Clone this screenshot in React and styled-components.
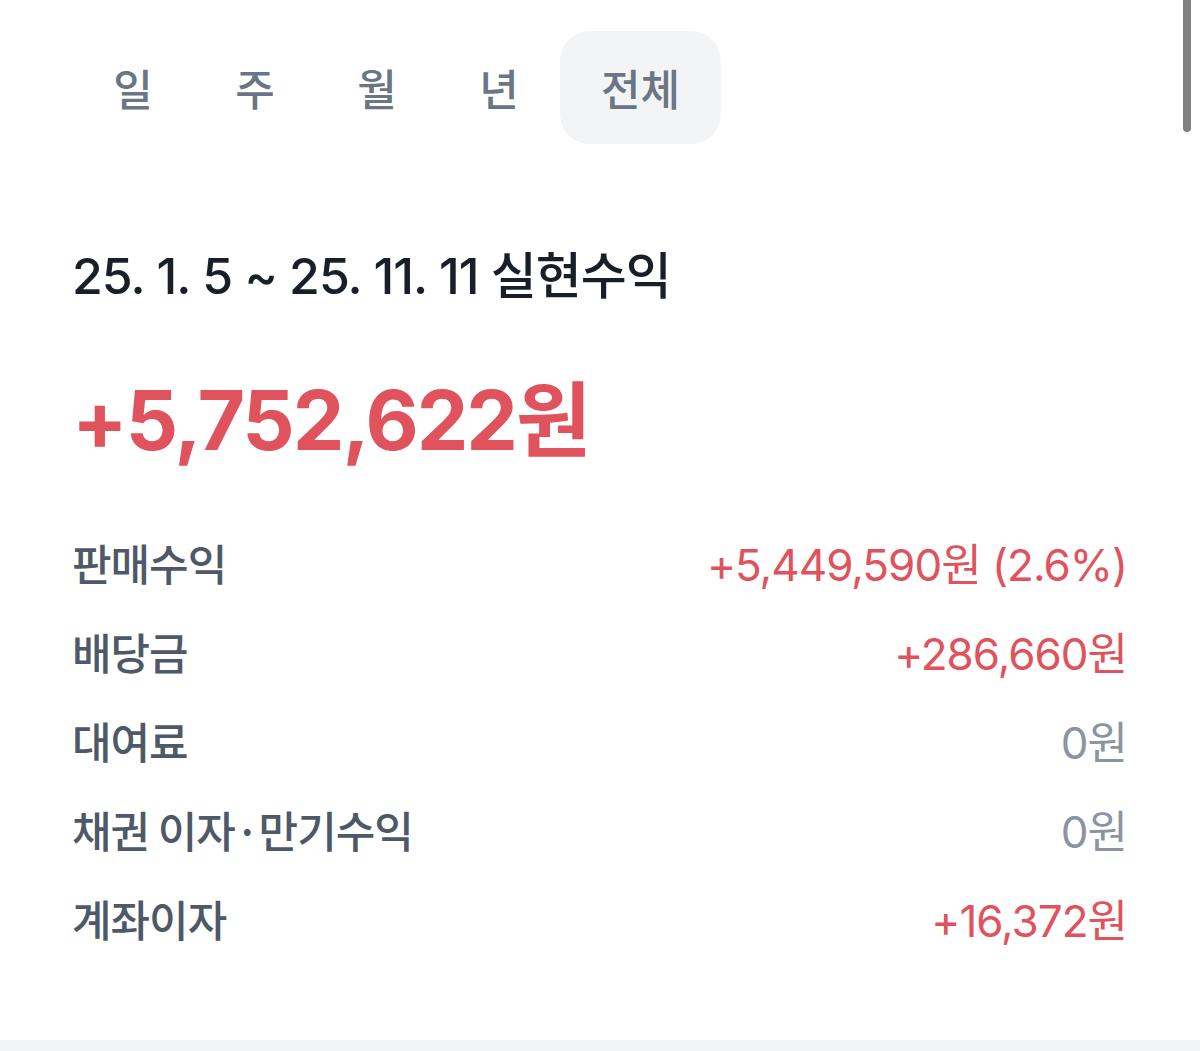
import React from "react";
import styled, { createGlobalStyle } from "styled-components";

const Global = createGlobalStyle`
  html, body { margin: 0; padding: 0; background: #ffffff; }
  body { font-family: Inter, "Noto Sans CJK KR", sans-serif; overflow: hidden; }
`;

const Page = styled.div`
  position: relative;
  width: 1200px;
  height: 1051px;
  display: flex;
  flex-direction: column;
  background: #ffffff;
`;

const Content = styled.div`
  flex: 1;
  padding: 31px 73px 0 72px;
  display: flex;
  flex-direction: column;
`;

const Tabs = styled.div`
  display: flex;
  align-items: center;
`;

const Tab = styled.button`
  height: 113px;
  min-width: 122px;
  padding: 0 41px;
  border: none;
  border-radius: 30px;
  background: ${(p) => (p.$active ? "#f2f4f6" : "transparent")};
  color: #6b7684;
  font-family: "Noto Sans CJK KR", sans-serif;
  font-size: 43px;
  font-weight: 500;
  line-height: 1;
  cursor: pointer;
`;

const Title = styled.div`
  margin-top: 100px;
  color: #191f28;
  font-size: 50px;
  font-weight: 500;
  line-height: 64px;
  letter-spacing: -1px;
`;

const Total = styled.div`
  margin-top: 63px;
  color: #e0525c;
  font-size: 82px;
  font-weight: 700;
  line-height: 100px;
  letter-spacing: -2px;
`;

const List = styled.div`
  margin-top: 46px;
  display: flex;
  flex-direction: column;
`;

const Row = styled.div`
  height: 89px;
  display: flex;
  align-items: center;
  justify-content: space-between;
`;

const Label = styled.span`
  color: #4e5968;
  font-family: "Noto Sans CJK KR", sans-serif;
  font-size: 43px;
  font-weight: 500;
  letter-spacing: -1px;
`;

const Value = styled.span`
  color: ${(p) => (p.$zero ? "#8b95a1" : "#e0525c")};
  font-size: 44px;
  font-weight: 400;
  letter-spacing: -1px;
  white-space: pre;
`;

const BottomBand = styled.div`
  height: 11px;
  background: #f2f4f6;
`;

const Scrollbar = styled.div`
  position: absolute;
  top: 0;
  right: 9px;
  width: 8px;
  height: 132px;
  border-radius: 0 0 4px 4px;
  background: #808080;
`;

const tabs = ["일", "주", "월", "년", "전체"];
const rows = [
  { label: "판매수익", value: "+5,449,590원 (2.6%)" },
  { label: "배당금", value: "+286,660원" },
  { label: "대여료", value: "0원", zero: true },
  { label: "채권 이자·만기수익", value: "0원", zero: true },
  { label: "계좌이자", value: "+16,372원" },
];

export default function App() {
  return (
    <Page>
      <Global />
      <Content>
        <Tabs>
          {tabs.map((t) => (
            <Tab key={t} $active={t === "전체"}>
              {t}
            </Tab>
          ))}
        </Tabs>
        <Title>25. 1. 5 ~ 25. 11. 11 실현수익</Title>
        <Total>+5,752,622원</Total>
        <List>
          {rows.map((r) => (
            <Row key={r.label}>
              <Label>{r.label}</Label>
              <Value $zero={r.zero}>{r.value}</Value>
            </Row>
          ))}
        </List>
      </Content>
      <BottomBand />
      <Scrollbar />
    </Page>
  );
}
